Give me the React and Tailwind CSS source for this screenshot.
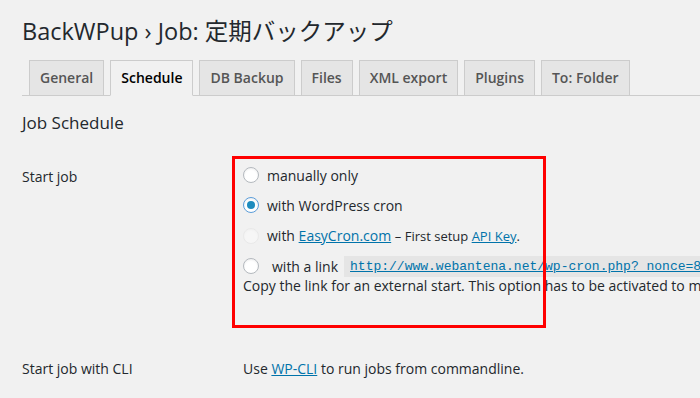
import React from 'react';

const TABS = ['General', 'Schedule', 'DB Backup', 'Files', 'XML export', 'Plugins', 'To: Folder'];

function Radio({ checked, disabled, focused }) {
  return (
    <span
      className={`flex h-4 w-4 shrink-0 items-center justify-center rounded-full border bg-white shadow-[inset_0_1px_2px_rgba(0,0,0,0.07)] ${
        focused ? 'border-[#5b9dd9] shadow-[0_0_2px_rgba(30,140,190,0.8)]' : 'border-[#b4b9be]'
      } ${disabled ? 'opacity-40 border-[#ddd]' : ''}`}
    >
      {checked && <span className="h-2 w-2 rounded-full bg-[#1e8cbe]" />}
    </span>
  );
}

export default function App() {
  return (
    <div className="relative h-[398px] w-[700px] overflow-hidden bg-[#f1f1f1] text-[#23282d] font-['Open_Sans','Noto_Sans_CJK_JP',sans-serif]">
      <div className="pl-[22px] pt-[17px]">
        <h1 className="text-[23.5px] leading-[29px] font-normal whitespace-nowrap">
          BackWPup › Job: 定期バックアップ
        </h1>

        {/* tabs */}
        <div className="mt-[14px] flex border-b border-[#ccc] pl-[7px]">
          {TABS.map((t) => {
            const active = t === 'Schedule';
            return (
              <div
                key={t}
                className={`mr-[6px] -mb-px border border-[#ccc] px-[10px] pt-[5px] pb-[5px] text-[14px] leading-[24px] font-semibold whitespace-nowrap ${
                  active ? 'bg-[#f1f1f1] border-b-[#f1f1f1] text-[#000]' : 'bg-[#e5e5e5] text-[#555]'
                }`}
              >
                {t}
              </div>
            );
          })}
        </div>

        <h2 className="mt-[15px] text-[17px] leading-[24px] font-normal">Job Schedule</h2>

        {/* Start job */}
        <div className="mt-[25px] flex text-[14px]">
          <div className="w-[221px] shrink-0 pt-[7px] leading-[20px]">Start job</div>
          <div className="flex flex-col whitespace-nowrap">
            <div className="flex h-[30px] items-center gap-2">
              <Radio />
              <span>manually only</span>
            </div>
            <div className="flex h-[30px] items-center gap-2">
              <Radio checked focused />
              <span>with WordPress cron</span>
            </div>
            <div className="flex h-[31px] items-center gap-2">
              <Radio disabled />
              <span>
                with{' '}
                <a className="text-[#0073aa] underline">EasyCron.com</a>{' '}
                <span className="text-[13px]">
                  – First setup <a className="text-[#0073aa] underline">API Key</a>.
                </span>
              </span>
            </div>
            <div className="flex h-[30px] items-center">
              <Radio />
              <span className="ml-[13px]">with a link</span>
              <code className="ml-[6px] bg-[#e5e5e5] px-[6px] py-[2px] font-['Liberation_Mono',monospace] text-[13px] leading-[17px]">
                <a className="text-[#0073aa] underline">
                  http://www.webantena.net/wp-cron.php?_nonce=8c1f2a9b7d&amp;backwpup_run=runext&amp;jobid=2
                </a>
              </code>
            </div>
            <p className="-mt-[3px] leading-[16px]">
              Copy the link for an external start. This option has to be activated to make the link work!
            </p>
          </div>
        </div>

        {/* CLI */}
        <div className="mt-[65px] flex text-[14px] leading-[20px]">
          <div className="w-[221px] shrink-0">Start job with CLI</div>
          <div className="whitespace-nowrap">
            Use <a className="text-[#0073aa] underline">WP-CLI</a> to run jobs from commandline.
          </div>
        </div>
      </div>

      {/* red highlight annotation */}
      <div className="pointer-events-none absolute left-[232px] top-[156px] h-[172px] w-[314px] border-[3px] border-[#ff0000]" />
    </div>
  );
}
